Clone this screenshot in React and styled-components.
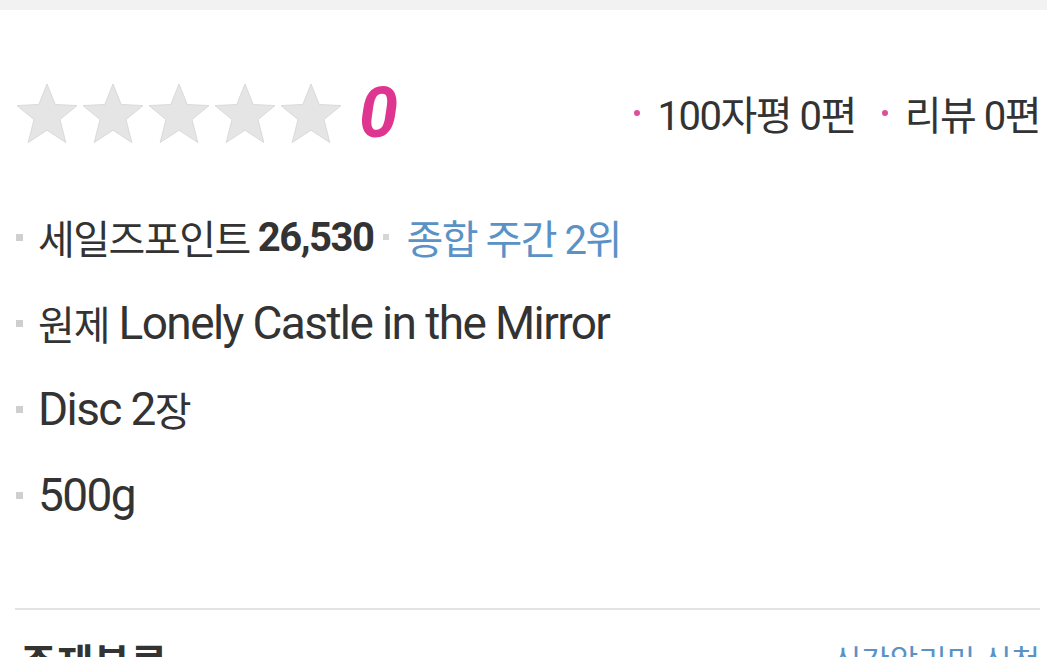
import React from "react";
import styled, { createGlobalStyle } from "styled-components";

const Global = createGlobalStyle`
  html, body { margin: 0; padding: 0; background: #fff; }
  body { font-family: Roboto, "Noto Sans CJK KR", sans-serif; color: #333; overflow: hidden; }
`;

const Page = styled.div`
  width: 1047px;
  height: 657px;
  overflow: hidden;
  background: #fff;
`;

const TopBand = styled.div`
  height: 10px;
  background: #f2f2f2;
`;

const Section = styled.section`
  padding: 0 7px 0 15px;
`;

const RatingRow = styled.div`
  display: flex;
  align-items: center;
  justify-content: space-between;
  margin-top: 70px;
  height: 66px;
`;

const Stars = styled.div`
  display: flex;
  align-items: center;
  gap: 2px;
`;

const Score = styled.span`
  margin-left: 14px;
  font-size: 70px;
  font-weight: 700;
  font-style: italic;
  color: #de3690;
  line-height: 1;
`;

const Counts = styled.div`
  display: flex;
  align-items: center;
  gap: 26px;
  font-size: 40px;
  letter-spacing: -1.5px;
  color: #333;
`;

const Count = styled.span`
  display: flex;
  align-items: center;
  &::before {
    content: "";
    width: 6px;
    height: 6px;
    border-radius: 50%;
    background: #de4f98;
    margin-right: 17px;
  }
`;

const InfoList = styled.ul`
  list-style: none;
  margin: 48px 0 0;
  padding: 0;
  display: flex;
  flex-direction: column;
`;

const Item = styled.li`
  display: flex;
  align-items: center;
  height: 86px;
  font-size: 40px;
  letter-spacing: ${(p) => p.$spacing}px;
  color: #333;
  white-space: pre;
  &::before {
    content: "";
    flex: none;
    width: 7px;
    height: 7px;
    background: #cfcfcf;
    margin: 0 15px 0 1px;
  }
`;

const Latin = styled.span`
  font-size: 46px;
  letter-spacing: -1.6px;
`;

const Bold = styled.b`
  font-weight: 700;
  margin-left: 8px;
`;

const Sep = styled.span`
  display: inline-block;
  width: 6px;
  height: 6px;
  background: #d6d6d6;
  margin: 0 17px 0 10px;
`;

const Rank = styled.span`
  color: #5a92c6;
`;

const Divider = styled.hr`
  border: none;
  height: 2px;
  background: #e3e3e3;
  margin: 70px 0 0;
`;

const Footer = styled.div`
  display: flex;
  justify-content: space-between;
  align-items: flex-start;
  margin-top: 22px;
`;

const FooterTitle = styled.span`
  font-size: 40px;
  font-weight: 700;
  color: #333;
  margin-left: 5px;
`;

const FooterLink = styled.span`
  margin-top: 4px;
  font-size: 31px;
  color: #5a92c6;
`;

const Star = () => (
  <svg width="64" height="63" viewBox="0 0 64 63">
    <path
      d="M32 2 L40.2 22.5 L62 23.6 L45 37.6 L50.8 60.5 L32 48.2 L13.2 60.5 L19 37.6 L2 23.6 L23.8 22.5 Z"
      fill="#e5e5e5"
      stroke="#dadada"
      strokeWidth="1"
      strokeLinejoin="round"
    />
  </svg>
);

export default function App() {
  return (
    <Page>
      <Global />
      <TopBand />
      <Section>
        <RatingRow>
          <Stars>
            <Star />
            <Star />
            <Star />
            <Star />
            <Star />
            <Score>0</Score>
          </Stars>
          <Counts>
            <Count>100자평 0편</Count>
            <Count>리뷰 0편</Count>
          </Counts>
        </RatingRow>
        <InfoList>
          <Item $spacing={-1.5}>
            세일즈포인트
            <Bold>26,530</Bold>
            <Sep />
            <Rank>종합 주간 2위</Rank>
          </Item>
          <Item $spacing={-1}>
            {"원제 "}
            <Latin>Lonely Castle in the Mirror</Latin>
          </Item>
          <Item $spacing={-1}>
            <Latin>Disc 2</Latin>장
          </Item>
          <Item $spacing={-1}>
            <Latin>500g</Latin>
          </Item>
        </InfoList>
        <Divider />
        <Footer>
          <FooterTitle>주제분류</FooterTitle>
          <FooterLink>신간알리미 신청</FooterLink>
        </Footer>
      </Section>
    </Page>
  );
}
